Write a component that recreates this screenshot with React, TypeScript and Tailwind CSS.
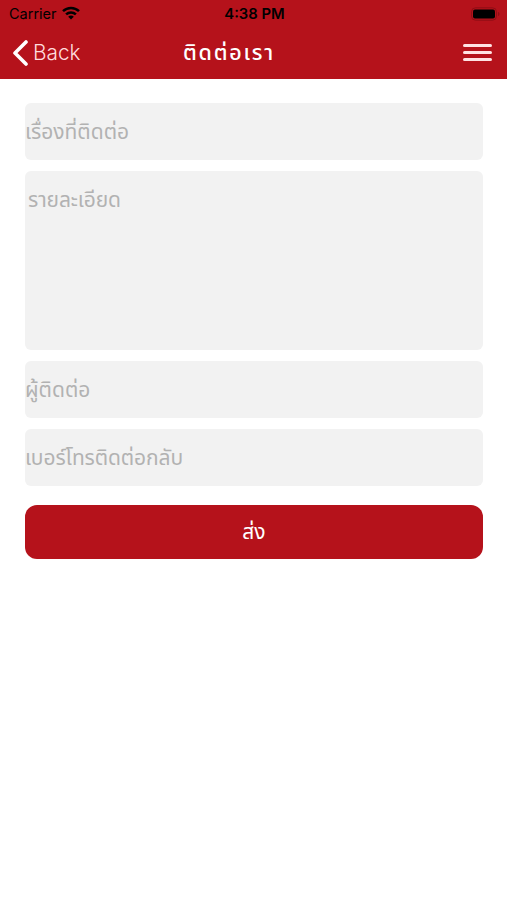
import React from 'react';

const fieldClass =
  'block w-full rounded-[6px] bg-[#f2f2f2] text-[#b2b2b2] placeholder:text-[#b2b2b2] placeholder:opacity-100 outline-none';

function StatusBar() {
  return (
    <div className="grid h-7 grid-cols-3 items-center pl-[9px] pr-[7px] text-black">
      <div className="flex items-center gap-[5px]">
        <span className="text-[14.5px]">Carrier</span>
        <svg className="mb-[2px]" width="18" height="14" viewBox="0 0 18 14" fill="none" stroke="currentColor" strokeWidth="2.5">
          <path d="M1 5.2C5.5 0.8 12.5 0.8 17 5.2" />
          <path d="M4.1 8.4C6.9 5.7 11.1 5.7 13.9 8.4" />
          <path d="M9 13.6L6.2 10.7C7.8 9.2 10.2 9.2 11.8 10.7Z" fill="currentColor" stroke="none" />
        </svg>
      </div>
      <span className="text-center text-[14.8px] font-semibold">4:38 PM</span>
      <svg className="mb-px justify-self-end" width="30" height="14" viewBox="0 0 30 14">
        <rect x="1.5" y="0.8" width="25" height="12.4" rx="4" fill="none" stroke="#8f0e15" strokeWidth="1" />
        <rect x="3" y="2.5" width="22" height="9" rx="2" fill="#000" />
        <path d="M28 5v4c1-.4 1.5-1 1.5-2s-.5-1.6-1.5-2Z" fill="#8f0e15" />
      </svg>
    </div>
  );
}

export default function App() {
  return (
    <div className="h-[900px] w-[507px] overflow-hidden bg-white font-['Inter','Noto_Sans_Thai','Noto_Sans',sans-serif]">
      <header className="h-[79px] bg-[#b5121b]">
        <StatusBar />
        <nav className="flex h-[49px] items-center pl-3 pr-[15px] text-white">
          <button className="flex w-[171px] items-center gap-1 text-left">
            <svg width="17" height="26" viewBox="0 0 17 26" fill="none" stroke="currentColor" strokeWidth="3.6" strokeLinecap="round" strokeLinejoin="round">
              <path d="M14 2L3 13l11 11" />
            </svg>
            <span className="text-[20.8px] font-light text-[#ffdcdd]">Back</span>
          </button>
          <h1 className="whitespace-nowrap text-[21.5px] font-medium tracking-[1.8px]">ติดต่อเรา</h1>
          <button aria-label="Menu" className="ml-auto flex w-[29px] flex-col gap-1">
            <span className="h-[3px] rounded-full bg-[#ffe2e3]" />
            <span className="h-[3px] rounded-full bg-[#ffe2e3]" />
            <span className="h-[3px] rounded-full bg-[#ffe2e3]" />
          </button>
        </nav>
      </header>

      <form className="flex flex-col gap-[11px] pl-[25px] pr-6 pt-6 text-[21px]">
        <input className={`${fieldClass} h-[57px]`} placeholder="เรื่องที่ติดต่อ" />
        <textarea className={`${fieldClass} h-[179px] resize-none px-[3px] py-[13px] tracking-[-0.1px]`} placeholder="รายละเอียด" />
        <input className={`${fieldClass} h-[57px]`} placeholder="ผู้ติดต่อ" />
        <input className={`${fieldClass} h-[57px] tracking-[-0.1px]`} placeholder="เบอร์โทรติดต่อกลับ" />
        <button type="button" className="mt-2 h-[54px] rounded-[12px] bg-[#b5121b] text-white">
          ส่ง
        </button>
      </form>
    </div>
  );
}
